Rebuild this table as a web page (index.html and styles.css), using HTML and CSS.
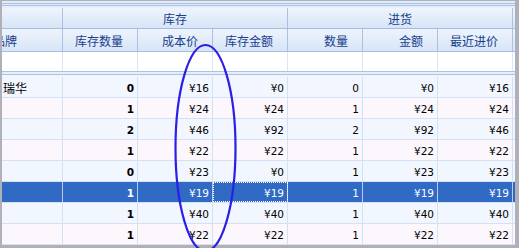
FILE: index.html
```html
<!DOCTYPE html>
<html lang="zh">
<head>
<meta charset="utf-8">
<title>库存</title>
<link rel="stylesheet" href="styles.css">
</head>
<body>
<div class="frame">
  <div class="grid">
    <div class="topbar"></div>
    <div class="hrow bands">
      <div class="hc"></div>
      <div class="hc center">库存</div>
      <div class="hc center">进货</div>
      <div class="fill"></div>
    </div>
    <div class="hrow cols">
      <div class="hc brand">品牌</div>
      <div class="hc">库存数量</div>
      <div class="hc">成本价</div>
      <div class="hc">库存金额</div>
      <div class="hc">数量</div>
      <div class="hc">金额</div>
      <div class="hc">最近进价</div>
      <div class="fill"></div>
    </div>
    <div class="row newrow">
      <div class="cell"></div><div class="cell"></div><div class="cell"></div><div class="cell"></div>
      <div class="cell"></div><div class="cell"></div><div class="cell"></div><div class="fill"></div>
    </div>
    <div class="sep"></div>
    <div class="row odd">
      <div class="cell txt">瑞华</div><div class="cell b">0</div><div class="cell">¥16</div><div class="cell">¥0</div>
      <div class="cell">0</div><div class="cell">¥0</div><div class="cell">¥16</div><div class="fill"></div>
    </div>
    <div class="row even">
      <div class="cell txt"></div><div class="cell b">1</div><div class="cell">¥24</div><div class="cell">¥24</div>
      <div class="cell">1</div><div class="cell">¥24</div><div class="cell">¥24</div><div class="fill"></div>
    </div>
    <div class="row odd">
      <div class="cell txt"></div><div class="cell b">2</div><div class="cell">¥46</div><div class="cell">¥92</div>
      <div class="cell">2</div><div class="cell">¥92</div><div class="cell">¥46</div><div class="fill"></div>
    </div>
    <div class="row even">
      <div class="cell txt"></div><div class="cell b">1</div><div class="cell">¥22</div><div class="cell">¥22</div>
      <div class="cell">1</div><div class="cell">¥22</div><div class="cell">¥22</div><div class="fill"></div>
    </div>
    <div class="row odd">
      <div class="cell txt"></div><div class="cell b">0</div><div class="cell">¥23</div><div class="cell">¥0</div>
      <div class="cell">1</div><div class="cell">¥23</div><div class="cell">¥23</div><div class="fill"></div>
    </div>
    <div class="row selected">
      <div class="cell txt"></div><div class="cell b">1</div><div class="cell">¥19</div><div class="cell focus">¥19</div>
      <div class="cell">1</div><div class="cell">¥19</div><div class="cell">¥19</div><div class="fill"></div>
    </div>
    <div class="row odd">
      <div class="cell txt"></div><div class="cell b">1</div><div class="cell">¥40</div><div class="cell">¥40</div>
      <div class="cell">1</div><div class="cell">¥40</div><div class="cell">¥40</div><div class="fill"></div>
    </div>
    <div class="row even">
      <div class="cell txt"></div><div class="cell b">1</div><div class="cell">¥22</div><div class="cell">¥22</div>
      <div class="cell">1</div><div class="cell">¥22</div><div class="cell">¥22</div><div class="fill"></div>
    </div>
  </div>
  <svg class="mark" width="519" height="248" viewBox="0 0 519 248">
    <ellipse cx="205.5" cy="148" rx="30" ry="103" fill="none" stroke="#2b1fe6" stroke-width="2.2"/>
  </svg>
</div>
</body>
</html>
```
FILE: styles.css
```css
html, body {
  margin: 0;
  padding: 0;
}
body {
  background: #b0b0b8;
  font-family: "DejaVu Sans", "Noto Sans CJK SC", sans-serif;
  font-size: 10.5px;
  color: #000;
}
.frame {
  position: relative;
  width: 519px;
  height: 248px;
  overflow: hidden;
}
.grid {
  margin: 1px 4px 0 2px;
  height: 244px;
  background: #ffffff;
  overflow: hidden;
}
.topbar {
  height: 7px;
  background: linear-gradient(to bottom,
    #e2ecf9 0, #e2ecf9 2px,
    #a8c2e7 2px, #a8c2e7 3px,
    #e2ecf9 3px, #e2ecf9 4px,
    #a8c2e7 4px, #a8c2e7 5px,
    #e6eefa 5px, #e6eefa 7px);
}
.hrow {
  display: grid;
  background: linear-gradient(to bottom, #eef4fd, #d7e5f7);
  border-bottom: 1px solid #a4bee3;
  font-family: "Noto Sans CJK SC", sans-serif;
  font-size: 12px;
  color: #17408c;
}
.bands {
  grid-template-columns: 61px 225px 225px 1fr;
  height: 20px;
}
.cols {
  grid-template-columns: 61px repeat(6, 75px) 1fr;
  height: 22px;
}
.hc {
  border-right: 1px solid #a9c2e4;
  display: flex;
  align-items: center;
  justify-content: flex-end;
  padding-right: 14px;
  white-space: nowrap;
  overflow: hidden;
  line-height: 14px;
}
.bands .hc {
  padding-top: 2px;
}
.cols .hc {
  padding-top: 1px;
}
.hc.center {
  justify-content: center;
  padding-right: 0;
}
.hc.brand {
  justify-content: flex-start;
  padding-right: 0;
  text-indent: -9px;
}
.row {
  display: grid;
  grid-template-columns: 61px repeat(6, 75px) 1fr;
  height: 20px;
  border-bottom: 1px solid #d3e1f2;
}
.cell {
  border-right: 1px solid #d3e1f2;
  display: flex;
  align-items: center;
  justify-content: flex-end;
  padding-right: 3px;
  white-space: nowrap;
  overflow: hidden;
  padding-top: 1px;
}
.cell.txt {
  justify-content: flex-start;
  padding-left: 1px;
  padding-right: 0;
  font-family: "Noto Sans CJK SC", sans-serif;
  font-size: 12px;
}
.cell.b {
  font-weight: bold;
}
.newrow {
  background: #ffffff;
  height: 19px;
  border-bottom: 0;
}
.newrow .cell {
  border-right-color: #dce7f5;
}
.sep {
  height: 6px;
  background: linear-gradient(to bottom,
    #a9c3e6 0, #a9c3e6 1px,
    #e6eefa 1px, #e6eefa 3px,
    #a9c3e6 3px, #a9c3e6 4px,
    #f1f6fe 4px, #f1f6fe 6px);
}
.odd {
  background: #f2f7ff;
}
.even {
  background: #fbf7fd;
}
.selected {
  background: #316ac5;
  color: #ffffff;
}
.selected .cell {
  border-right-color: #b9cdee;
}
.cell.focus {
  outline: 1px dotted #ffffff;
  outline-offset: -1px;
}
.mark {
  position: absolute;
  left: 0;
  top: 0;
  pointer-events: none;
}
```
